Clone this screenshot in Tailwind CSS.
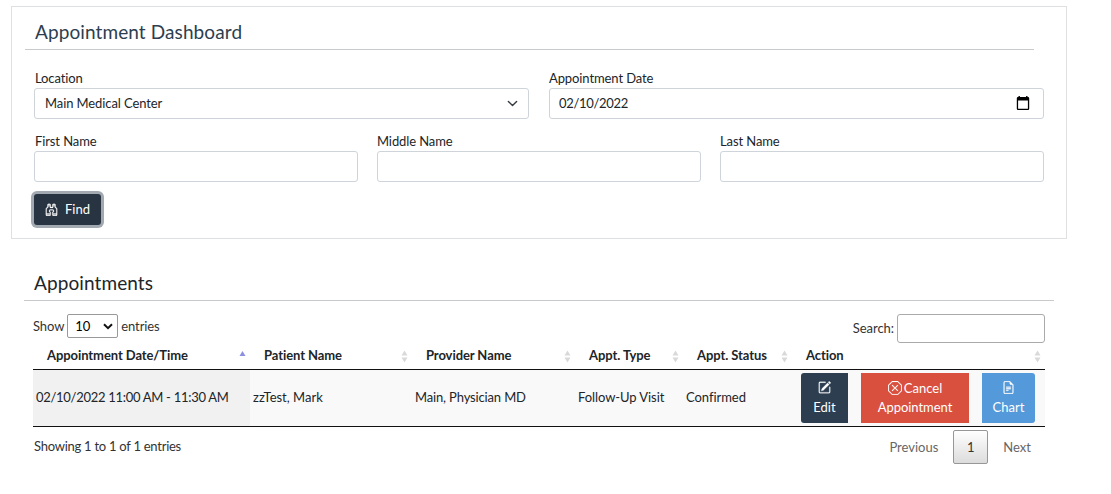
<!DOCTYPE html>
<html lang="en">
<head>
<meta charset="utf-8">
<title>Appointment Dashboard</title>
<script src="https://cdn.jsdelivr.net/npm/@tailwindcss/browser@4"></script>
</head>
<body class="bg-white font-['Lato',sans-serif] text-[13px] leading-5 text-[#212529] whitespace-nowrap overflow-hidden">
<main class="w-[1111px] h-[494px] pt-1.5 pl-[11px]">
  <section class="w-[1056px] h-[233px] border border-[#dee0e2] pl-[13px]">
    <h1 class="w-[1009px] h-[43px] border-b border-[#c8cacb] pl-[10px] pt-[13px] text-[19px] leading-6 tracking-[0.1px] text-[#2c3e50]">Appointment Dashboard</h1>
    <div class="pl-[9px] w-[1019px] pt-[19px]">
      <div class="grid grid-cols-2 gap-5 tracking-[-0.1px]">
        <div>
          <label class="block pl-px h-[19px] leading-[19px]">Location</label>
          <div class="h-[31px] border border-[#ced4da] rounded-[3px] px-2.5 pb-px flex items-center justify-between">
            <span>Main Medical Center</span>
            <svg class="w-[11px] h-[11px] mt-px" viewBox="0 0 16 16" fill="none" stroke="#343a40" stroke-width="2" stroke-linecap="round" stroke-linejoin="round"><path d="m2 5 6 6 6-6"/></svg>
          </div>
        </div>
        <div>
          <label class="block h-[19px] leading-[19px]">Appointment Date</label>
          <div class="h-[31px] border border-[#ced4da] rounded-[3px] pl-[9px] pr-[13px] pb-px flex items-center justify-between">
            <span class="tracking-[-0.3px]">02/10/2022</span>
            <svg class="w-[14px] h-[15px] mt-px" viewBox="0 0 14 15"><path fill="#000" fill-rule="evenodd" d="M2.500 0h1.400v1h6.200V0h1.400v1H12a1.200 1.200 0 0 1 1.200 1.200v10.600A1.200 1.200 0 0 1 12 14H2a1.200 1.200 0 0 1-1.200-1.200V2.200A1.200 1.200 0 0 1 2 1h.5zM2.100 4.500v8.200h9.800V4.500z"/></svg>
          </div>
        </div>
      </div>
      <div class="grid grid-cols-3 gap-[19px] pt-[13px] tracking-[-0.1px]">
        <div><label class="block pl-px h-[19px] leading-[19px]">First Name</label><div class="h-[31px] border border-[#ced4da] rounded-[3px]"></div></div>
        <div><label class="block h-[19px] leading-[19px]">Middle Name</label><div class="h-[31px] border border-[#ced4da] rounded-[3px]"></div></div>
        <div><label class="block h-[19px] leading-[19px]">Last Name</label><div class="h-[31px] border border-[#ced4da] rounded-[3px]"></div></div>
      </div>
      <button class="mt-3 w-[67px] h-[31px] rounded-[3px] bg-[#283442] ring-3 ring-[#a3a9b0] text-white flex items-center pl-[11px] pb-px gap-[7px]">
        <svg class="w-[13px] h-[13px] mt-px" viewBox="0 0 16 16" fill="currentColor" stroke="currentColor" stroke-width=".3"><path d="M3 2.500A1.500 1.500 0 0 1 4.500 1h1A1.500 1.500 0 0 1 7 2.500V5h2V2.500A1.500 1.500 0 0 1 10.500 1h1A1.500 1.500 0 0 1 13 2.500v2.382a.5.5 0 0 0 .276.447l.895.447A1.500 1.500 0 0 1 15 7.118V14.500a1.500 1.500 0 0 1-1.500 1.500h-3A1.500 1.500 0 0 1 9 14.500v-3a.5.5 0 0 1 .146-.354l.854-.853V9.500a.5.5 0 0 0-.5-.5h-3a.5.5 0 0 0-.5.5v.793l.854.853A.5.5 0 0 1 7 11.500v3A1.500 1.500 0 0 1 5.500 16h-3A1.500 1.500 0 0 1 1 14.500V7.118a1.500 1.500 0 0 1 .83-1.342l.894-.447A.5.5 0 0 0 3 4.882zM4.500 2a.5.5 0 0 0-.5.5V3h2v-.5a.5.5 0 0 0-.5-.5zM6 4H4v.882a1.500 1.500 0 0 1-.83 1.342l-.894.447A.5.5 0 0 0 2 7.118V13h4v-1.293l-.854-.853A.5.5 0 0 1 5 10.500v-1A1.500 1.500 0 0 1 6.500 8h3A1.500 1.500 0 0 1 11 9.500v1a.5.5 0 0 1-.146.354l-.854.853V13h4V7.118a.5.5 0 0 0-.276-.447l-.895-.447A1.500 1.500 0 0 1 12 4.882V4h-2v1.500a.5.5 0 0 1-.5.5h-3a.5.5 0 0 1-.5-.5zm4-1h2v-.5a.5.5 0 0 0-.5-.5h-1a.5.5 0 0 0-.5.5zm4 11h-4v.5a.5.5 0 0 0 .5.5h3a.5.5 0 0 0 .5-.5zm-8 0H2v.5a.5.5 0 0 0 .5.5h3a.5.5 0 0 0 .5-.5z"/></svg>
        <span>Find</span>
      </button>
    </div>
  </section>

  <section class="mt-8 pl-[13px]">
    <h2 class="w-[1030px] h-[30px] border-b border-[#c8cacb] pl-[10px] text-[19px] leading-6 tracking-[0.1px]">Appointments</h2>
    <div class="ml-[9px] w-[1012px] text-[#333]">
      <div class="flex justify-between items-start pt-[13px] h-[44px]">
        <div class="flex items-center h-6 gap-[3px] tracking-[-0.1px]">
          <span>Show</span>
          <div class="w-[51px] h-6 border border-[#999] rounded-[2px] flex items-center justify-between pl-[7px] pr-1 text-black">
            <span>10</span>
            <svg class="w-[10px] h-[7px]" viewBox="0 0 10 7" fill="none" stroke="#111" stroke-width="2"><path d="m1 1.200 4 4 4-4"/></svg>
          </div>
          <span>entries</span>
        </div>
        <div class="flex items-center gap-[3px]"><span class="-mt-0.5 tracking-[-0.05px]">Search:</span><div class="w-[148px] h-[29px] border border-[#aaa] rounded-[3px]"></div></div>
      </div>
      <div class="grid grid-cols-[217px_162px_163px_108px_109px_253px] h-[25px] border-b border-[#111] font-bold text-[#212529] leading-[21px] tracking-[-0.08px]">
        <div class="pl-[14px] pr-1 flex justify-between"><span>Appointment Date/Time</span><svg class="w-[7px] h-[14px] mt-[5px]" viewBox="0 0 7 14"><path fill="#8b8fe0" d="M.5 6h6L3.500 1z"/></svg></div>
        <div class="pl-[14px] pr-1 flex justify-between"><span>Patient Name</span><svg class="w-[7px] h-[14px] mt-[5px]" viewBox="0 0 7 14"><path fill="#d9d9d9" d="M.5 5.500h6L3.500.5zM.5 7.500h6l-3 5z"/></svg></div>
        <div class="pl-[14px] pr-1 flex justify-between"><span>Provider Name</span><svg class="w-[7px] h-[14px] mt-[5px]" viewBox="0 0 7 14"><path fill="#d9d9d9" d="M.5 5.500h6L3.500.5zM.5 7.500h6l-3 5z"/></svg></div>
        <div class="pl-[14px] pr-1 flex justify-between"><span>Appt. Type</span><svg class="w-[7px] h-[14px] mt-[5px]" viewBox="0 0 7 14"><path fill="#d9d9d9" d="M.5 5.500h6L3.500.5zM.5 7.500h6l-3 5z"/></svg></div>
        <div class="pl-[14px] pr-1 flex justify-between"><span>Appt. Status</span><svg class="w-[7px] h-[14px] mt-[5px]" viewBox="0 0 7 14"><path fill="#d9d9d9" d="M.5 5.500h6L3.500.5zM.5 7.500h6l-3 5z"/></svg></div>
        <div class="pl-[14px] pr-1 flex justify-between"><span>Action</span><svg class="w-[7px] h-[14px] mt-[5px]" viewBox="0 0 7 14"><path fill="#d9d9d9" d="M.5 5.500h6L3.500.5zM.5 7.500h6l-3 5z"/></svg></div>
      </div>
      <div class="grid grid-cols-[217px_162px_163px_108px_109px_253px] h-[57px] border-b border-[#111] bg-[#f9f9f9] text-[#212529] *:flex *:items-center *:pl-[3px] *:pb-0.5">
        <div class="bg-[#f1f1f1] tracking-[-0.29px]">02/10/2022 11:00 AM - 11:30 AM</div>
        <div>zzTest, Mark</div>
        <div class="tracking-[-0.15px]">Main, Physician MD</div>
        <div class="tracking-[-0.08px]">Follow-Up Visit</div>
        <div class="tracking-[-0.05px]">Confirmed</div>
        <div class="gap-[13px] text-white text-center">
          <div class="mt-0.5 ml-[6px] w-[47px] h-[50px] rounded-l-[3px] bg-[#2c3e50] flex flex-col items-center pt-2">
            <svg class="w-[13px] h-[13px]" viewBox="0 0 16 16" fill="currentColor" stroke="currentColor" stroke-width=".35"><path d="M15.502 1.940a.5.5 0 0 1 0 .706L14.459 3.690l-2-2L13.502.646a.5.5 0 0 1 .707 0zm-1.750 2.456-2-2L4.939 9.210a.5.5 0 0 0-.121.196l-.805 2.414a.25.25 0 0 0 .316.316l2.414-.805a.5.5 0 0 0 .196-.120z"/><path d="M1 13.500A1.500 1.500 0 0 0 2.500 15h11a1.500 1.500 0 0 0 1.500-1.500v-6a.5.5 0 0 0-1 0v6a.5.5 0 0 1-.5.5h-11a.5.5 0 0 1-.5-.5v-11a.5.5 0 0 1 .5-.5H9a.5.5 0 0 0 0-1H2.500A1.500 1.500 0 0 0 1 2.500z"/></svg>
            <span class="mt-[3px]">Edit</span>
          </div>
          <div class="mt-0.5 w-[108px] h-[50px] bg-[#d9503f] flex flex-col items-center pt-[5px]">
            <div class="flex items-center gap-[2px] h-5"><svg class="w-[14px] h-[14px] -mt-px" viewBox="0 0 16 16" fill="currentColor" stroke="currentColor" stroke-width=".2"><path d="M4.540.146A.5.5 0 0 1 4.893 0h6.214a.5.5 0 0 1 .353.146l4.394 4.394a.5.5 0 0 1 .146.353v6.214a.5.5 0 0 1-.146.353l-4.394 4.394a.5.5 0 0 1-.353.146H4.893a.5.5 0 0 1-.353-.146L.146 11.460A.5.5 0 0 1 0 11.107V4.893a.5.5 0 0 1 .146-.353zM5.100 1 1 5.100v5.800L5.100 15h5.800l4.100-4.100V5.100L10.900 1z"/><path d="M4.646 4.646a.5.5 0 0 1 .708 0L8 7.293l2.646-2.647a.5.5 0 0 1 .708.708L8.707 8l2.647 2.646a.5.5 0 0 1-.708.708L8 8.707l-2.646 2.647a.5.5 0 0 1-.708-.708L7.293 8 4.646 5.354a.5.5 0 0 1 0-.708"/></svg><span>Cancel</span></div>
            <span class="-mt-px tracking-[-0.05px]">Appointment</span>
          </div>
          <div class="mt-0.5 w-[53px] h-[50px] rounded-r-[3px] bg-[#5499d9] flex flex-col items-center pt-2">
            <svg class="w-[13px] h-[13px]" viewBox="0 0 16 16" fill="currentColor" stroke="currentColor" stroke-width=".35"><path d="M5.500 7a.5.5 0 0 0 0 1h5a.5.5 0 0 0 0-1zM5 9.500a.5.5 0 0 1 .5-.5h5a.5.5 0 0 1 0 1h-5a.5.5 0 0 1-.5-.5m0 2a.5.5 0 0 1 .5-.5h2a.5.5 0 0 1 0 1h-2a.5.5 0 0 1-.5-.5"/><path d="M9.500 0H4a2 2 0 0 0-2 2v12a2 2 0 0 0 2 2h8a2 2 0 0 0 2-2V4.500zm0 1v2A1.500 1.500 0 0 0 11 4.500h2V14a1 1 0 0 1-1 1H4a1 1 0 0 1-1-1V2a1 1 0 0 1 1-1z"/></svg>
            <span class="mt-[3px]">Chart</span>
          </div>
        </div>
      </div>
      <div class="flex justify-between">
        <div class="pt-[9px] pl-px tracking-[-0.26px]">Showing 1 to 1 of 1 entries</div>
        <div class="flex items-center pt-[3px] pr-[14px] text-[#666]">
          <span>Previous</span>
          <span class="ml-[15px] mr-[15px] w-[35px] h-[34px] border border-[#979797] rounded-[2px] bg-linear-to-b from-white to-[#dcdcdc] text-[#333] flex items-center justify-center">1</span>
          <span>Next</span>
        </div>
      </div>
    </div>
  </section>
</main>
</body>
</html>
